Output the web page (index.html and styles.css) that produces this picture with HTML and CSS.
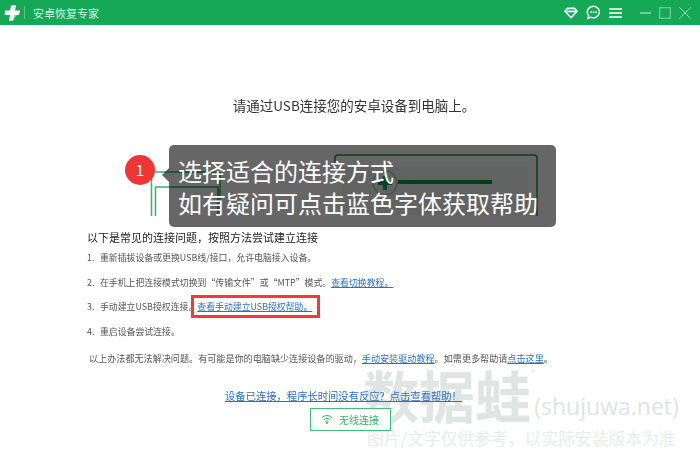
FILE: index.html
```html
<!DOCTYPE html>
<html lang="zh-CN">
<head>
<meta charset="utf-8">
<title>安卓恢复专家</title>
<link rel="stylesheet" href="styles.css">
</head>
<body>
<div class="app">
  <header class="titlebar">
    <svg class="logo" width="18" height="18" viewBox="0 0 18 18"><path d="M7 6.500 L8 2 Q8.500 1 10 1 L13 1.500 L12 6.500 L17 6.500 L16 11 L11.500 11 L10.500 16 Q10 17 8.500 17 L6 16.500 L7 11 L2.500 11 Q1.500 11 1.500 10 L2.500 6.500 Z" fill="#fff"/><path d="M11 11 L14 11 L10.500 15.500 Z" fill="#8fd3a8"/></svg>
    <span class="sep"></span>
    <span class="app-name">安卓恢复专家</span>
    <div class="tools">
      <svg width="14" height="12" viewBox="0 0 16 14" fill="none" stroke="#fff"><path d="M4 1.500H12L15 5L8 12.500L1 5Z" stroke-width="2" stroke-linejoin="round"/><path d="M1.500 5.200H14.500" stroke-width="2"/></svg>
      <svg width="15" height="15" viewBox="0 0 15 15" fill="none"><path d="M7.500 1.200a6 5.800 0 1 1-2.800 11l-2.800 1.300.7-2.900a6 5.800 0 0 1 4.900-9.400Z" stroke="#fff" stroke-width="1.400"/><circle cx="5" cy="7.200" r=".9" fill="#fff"/><circle cx="7.600" cy="7.200" r=".9" fill="#fff"/><circle cx="10.200" cy="7.200" r=".9" fill="#fff"/></svg>
      <svg class="menu" width="13" height="12" viewBox="0 0 13 12" stroke="#fff" stroke-width="1.700"><path d="M0 2H13M0 6H13M0 10H13"/></svg>
      <svg width="11" height="12" viewBox="0 0 11 12" stroke="#8fd9ac" stroke-width="1.500"><path d="M0 6H11"/></svg>
      <svg width="12" height="12" viewBox="0 0 12 12" fill="none" stroke="#6fca93" stroke-width="1.300"><rect x=".7" y=".7" width="10.600" height="10.600"/></svg>
      <svg width="12" height="12" viewBox="0 0 12 12" fill="none" stroke="#a6e2bf" stroke-width="1"><path d="M.5 .5L11.500 11.500M11.500 .5L.5 11.500"/></svg>
    </div>
  </header>

  <div class="watermark">
    <div class="wm-main"><span class="wm-cn">数据蛙</span><span class="wm-reg">®</span><span class="wm-en">(shujuwa.net)</span></div>
    <div class="wm-sub">图片/文字仅供参考，以实际安装版本为准</div>
  </div>

  <main class="content">
    <h1 class="heading">请通过USB连接您的安卓设备到电脑上。</h1>
    <div class="illustration">
      <svg width="420" height="68" viewBox="0 0 420 68" fill="none">
        <path d="M1.500 68V26Q1.500 24 3.500 24H68Q70 24 70 26V68" stroke="#36b56b" stroke-width="1.500"/>
        <path d="M5.500 68V39H66" stroke="#36b56b" stroke-width="1.500"/>
        <path d="M66 39H68V68" stroke="#24a057" stroke-width="1.500"/>
        <path d="M185 24V10Q185 7 188 7H384Q387 7 387 10V68" stroke="#1f9a50" stroke-width="1.500"/>
        <rect x="192" y="19" width="186" height="48" fill="#f3f7f5"/>
        <path d="M248 34H342" stroke="#0f9a45" stroke-width="4"/>
        <circle cx="235" cy="35" r="12" stroke="#9fd8b6" stroke-width="1.500"/>
        <path d="M235 28V42M228 35H242" stroke="#14a857" stroke-width="4"/>
      </svg>
    </div>
    <section class="help">
      <h2 class="help-title">以下是常见的连接问题，按照方法尝试建立连接</h2>
      <ol class="steps">
        <li><span class="num">1.</span>重新插拔设备或更换USB线/接口，允许电脑接入设备。</li>
        <li><span class="num">2.</span>在手机上把连接模式切换到“传输文件”或“MTP”模式。<a href="#">查看切换教程。</a></li>
        <li><span class="num">3.</span>手动建立USB授权连接。<a class="boxed" href="#">查看手动建立USB授权帮助。</a></li>
        <li><span class="num">4.</span>重启设备尝试连接。</li>
      </ol>
      <p class="note">以上办法都无法解决问题。有可能是你的电脑缺少连接设备的驱动，<a href="#">手动安装驱动教程</a>。如需更多帮助请<a href="#">点击这里</a>。</p>
    </section>
    <a class="stuck" href="#">设备已连接，程序长时间没有反应？点击查看帮助！</a>
    <button class="wireless" type="button">
      <svg width="12" height="10" viewBox="0 0 12 10" fill="none" stroke="#2fb36a" stroke-width="1"><path d="M1 3.500Q6 -.5 11 3.500M2.800 5.500Q6 3 9.200 5.500M4.500 7.400Q6 6.400 7.500 7.400"/><circle cx="6" cy="9" r=".6" fill="#2fb36a"/></svg>
      无线连接
    </button>
  </main>

  <div class="tip">
    <span class="badge">1</span>
    <span class="arrow"></span>
    <p class="tip-text">选择适合的连接方式<br>如有疑问可点击蓝色字体获取帮助</p>
  </div>
</div>
</body>
</html>
```

FILE: styles.css
```css
* { box-sizing: border-box; }
html, body { margin: 0; padding: 0; background: #fff; }
body { font-family: "Noto Sans CJK SC", "Liberation Sans", sans-serif; }
.app { position: relative; width: 700px; height: 460px; overflow: hidden; background: #fff; }

.titlebar { display: flex; align-items: center; height: 25px; background: #14a857; padding: 0 9px 0 3px; }
.logo { flex: none; }
.sep { width: 1px; height: 13px; margin: 0 8px 0 3px; background: #5cc487; }
.app-name { color: #d9f2e3; font-size: 11px; }
.tools { display: flex; align-items: center; gap: 8px; margin-left: auto; }
.tools .menu { margin-right: 10px; }

.content { position: relative; display: flex; flex-direction: column; align-items: center; filter: blur(.3px); }
.heading { margin: 71px 0 0 8px; font-size: 13.500px; font-weight: 400; line-height: 18px; color: #333; }
.illustration { align-self: flex-start; margin: 20px 0 0 150px; height: 95px; }
.illustration svg { display: block; margin-top: 14px; }

.help { align-self: flex-start; width: 600px; margin-left: 87px; }
.help-title { margin: 0; font-size: 11px; line-height: 16px; font-weight: 400; color: #222; }
.steps { list-style: none; margin: 0; padding: 0; font-size: 8.900px; color: #555; }
.steps li { display: flex; align-items: center; height: 24.700px; white-space: nowrap; }
.num { width: 13px; }
a { color: #2d6fc4; text-decoration: underline; }
.boxed { position: relative; }
.boxed::after { content: ""; position: absolute; left: -6px; right: -8px; top: -5px; bottom: -5px; border: 3px solid #f13a3a; }
.note { margin: 6px 0 0 2px; font-size: 9.100px; line-height: 16px; color: #555; white-space: nowrap; }

.stuck { margin: 22px 13px 0 0; font-size: 10.300px; line-height: 16px; color: #2d6fc4; }
.wireless { display: flex; align-items: center; justify-content: center; gap: 6px; width: 81px; height: 23px; margin-top: 4px; padding: 0; border: 1px solid #3cc07a; background: #fff; color: #2fb36a; font-family: inherit; font-size: 10px; }

.watermark { position: absolute; left: 363px; top: 364px; color: #dfe5e2; }
.wm-main { display: flex; align-items: flex-end; height: 60px; }
.wm-cn { font-size: 56px; line-height: 60px; font-weight: 700; white-space: nowrap; }
.wm-reg { align-self: flex-start; font-size: 9px; margin-top: 2px; }
.wm-en { font-family: "Open Sans", sans-serif; font-size: 23px; line-height: 24px; margin-left: -1px; margin-bottom: 6px; white-space: nowrap; }
.wm-sub { font-size: 16.800px; line-height: 18px; white-space: nowrap; margin-left: 4px; margin-top: 5px; color: #e8eceb; }

.tip { position: absolute; left: 169px; top: 145px; width: 387px; height: 82px; border-radius: 5px; background: rgba(0, 0, 0, .6); }
.badge { position: absolute; left: -44px; top: 10px; width: 30px; height: 30px; border-radius: 50%; background: #f03535; color: #fff; font-size: 15px; line-height: 30px; text-align: center; }
.arrow { position: absolute; left: -7px; top: 23px; width: 0; height: 0; border: 7px solid transparent; border-left: 0; border-right-color: rgba(0, 0, 0, .6); }
.tip-text { margin: 10px 0 0 9px; font-size: 24px; line-height: 32px; color: #fff; white-space: nowrap; }
```
